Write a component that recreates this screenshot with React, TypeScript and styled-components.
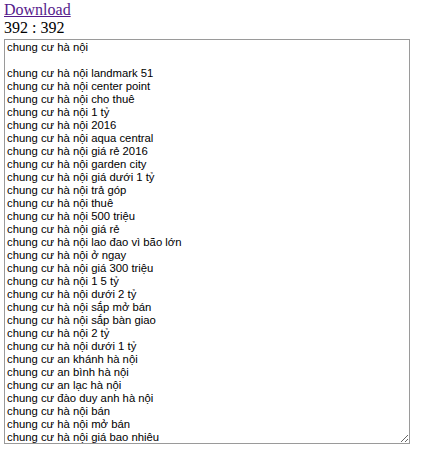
import React from 'react';
import styled, { createGlobalStyle } from 'styled-components';

const GlobalStyle = createGlobalStyle`
  body {
    margin: 0;
    background: #ffffff;
    font-family: "Liberation Serif", "Times New Roman", serif;
    color: #000000;
  }
`;

const Page = styled.div`
  display: flex;
  flex-direction: column;
  align-items: flex-start;
  padding: 1px 4px 0;
`;

const DownloadLink = styled.a`
  font-size: 16px;
  line-height: 18px;
  color: #551a8b;
  text-decoration: underline;
`;

const Counter = styled.div`
  font-size: 16px;
  line-height: 18px;
`;

const KeywordBox = styled.textarea`
  box-sizing: border-box;
  margin-top: 2px;
  width: 406px;
  height: 405px;
  padding: 1px 2px;
  border: 1px solid #9a9a9a;
  font-family: "Liberation Sans", Arial, sans-serif;
  font-size: 11.3px;
  line-height: 13px;
  color: #000000;
  overflow: hidden;
  outline: none;
`;

const base = 'chung cư hà nội';

const keywords = [
  base,
  '',
  `${base} landmark 51`,
  `${base} center point`,
  `${base} cho thuê`,
  `${base} 1 tỷ`,
  `${base} 2016`,
  `${base} aqua central`,
  `${base} giá rẻ 2016`,
  `${base} garden city`,
  `${base} giá dưới 1 tỷ`,
  `${base} trả góp`,
  `${base} thuê`,
  `${base} 500 triệu`,
  `${base} giá rẻ`,
  `${base} lao đao vì bão lớn`,
  `${base} ở ngay`,
  `${base} giá 300 triệu`,
  `${base} 1 5 tỷ`,
  `${base} dưới 2 tỷ`,
  `${base} sắp mở bán`,
  `${base} sắp bàn giao`,
  `${base} 2 tỷ`,
  `${base} dưới 1 tỷ`,
  'chung cư an khánh hà nội',
  'chung cư an bình hà nội',
  'chung cư an lạc hà nội',
  'chung cư đào duy anh hà nội',
  `${base} bán`,
  `${base} mở bán`,
  `${base} giá bao nhiêu`,
  `${base} giá rẻ nhất`,
  `${base} quận cầu giấy`,
];

const App = () => (
  <>
    <GlobalStyle />
    <Page>
      <DownloadLink href="#">Download</DownloadLink>
      <Counter>392 : 392</Counter>
      <KeywordBox defaultValue={keywords.join('\n')} spellCheck={false} readOnly />
    </Page>
  </>
);

export default App;
